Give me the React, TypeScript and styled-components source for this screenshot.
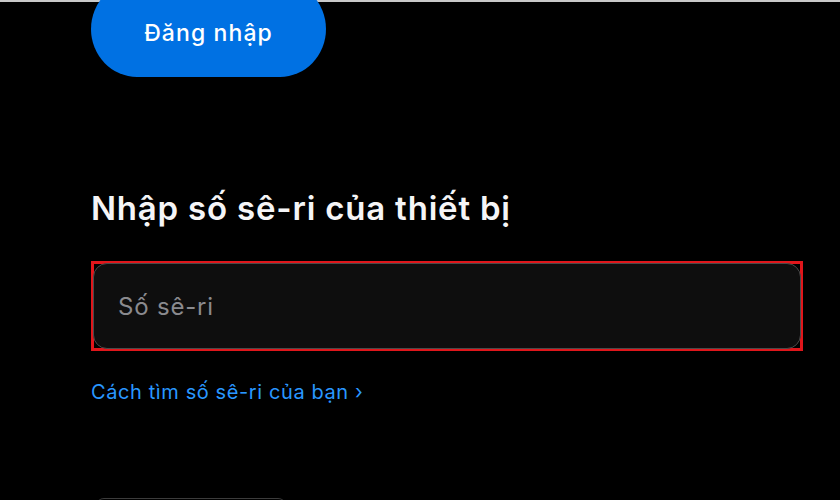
import React from "react";
import styled, { createGlobalStyle } from "styled-components";

const Global = createGlobalStyle`
  html, body { margin: 0; padding: 0; background: #000; }
  body { width: 840px; height: 500px; overflow: hidden; font-family: Inter, "Liberation Sans", Arial, sans-serif; }
`;

const Page = styled.div`
  width: 840px;
  height: 500px;
  background: #000;
  display: flex;
  flex-direction: column;
  overflow: hidden;
`;

const TopStrip = styled.div`
  height: 2px;
  background: #c9c9c9;
  flex: none;
`;

const Content = styled.div`
  display: flex;
  flex-direction: column;
  align-items: flex-start;
  padding-left: 91px;
`;

const SignInButton = styled.button`
  width: 235px;
  height: 96px;
  margin-top: -21px;
  border: none;
  border-radius: 48px / 50px;
  background: #0071e3;
  color: #fff;
  font-family: Inter, "Liberation Sans", Arial, sans-serif;
  font-size: 23px;
  font-weight: 500;
  letter-spacing: 1.1px;
  padding: 8px 0 0;
  cursor: pointer;
`;

const Heading = styled.h2`
  margin: 111px 0 0;
  color: #f5f5f7;
  font-size: 33px;
  line-height: 40px;
  font-weight: 600;
  letter-spacing: 0.8px;
`;

const Frame = styled.div`
  margin-top: 33px;
  width: 706px;
  height: 84px;
  border: 3px solid #e0161b;
  background: #000;
  display: flex;
`;

const Field = styled.div`
  flex: 1;
  border: 1px solid #4a4a4a;
  border-radius: 14px;
  background: #0e0e0e;
  margin: -1px;
  display: flex;
  align-items: center;
  padding-left: 24px;
  color: #8a8a8e;
  font-size: 24px;
  letter-spacing: 0.8px;
`;

const HelpLink = styled.a`
  margin-top: 29px;
  color: #2997ff;
  font-size: 20px;
  line-height: 24px;
  letter-spacing: 0.6px;
  text-decoration: none;
  cursor: pointer;
`;

const NextCard = styled.div`
  margin-top: 94px;
  margin-left: 5px;
  width: 190px;
  height: 40px;
  border-top: 1px solid #3c3c3c;
  border-radius: 8px 8px 0 0;
`;

export default function App() {
  return (
    <>
      <Global />
      <Page>
        <TopStrip />
        <Content>
          <SignInButton>Đăng nhập</SignInButton>
          <Heading>Nhập số sê-ri của thiết bị</Heading>
          <Frame>
            <Field>Số sê-ri</Field>
          </Frame>
          <HelpLink>Cách tìm số sê-ri của bạn ›</HelpLink>
          <NextCard />
        </Content>
      </Page>
    </>
  );
}
